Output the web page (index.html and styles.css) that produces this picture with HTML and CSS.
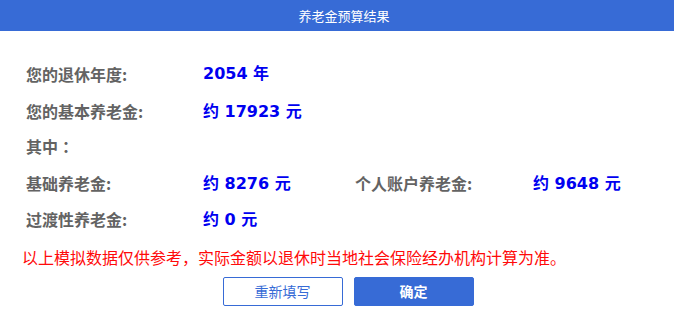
FILE: index.html
```html
<!DOCTYPE html>
<html lang="zh-CN">
<head>
<meta charset="utf-8">
<title>养老金预算结果</title>
<link rel="stylesheet" href="styles.css">
</head>
<body>
<div class="dialog">
  <div class="header">养老金预算结果</div>
  <div class="content">
    <div class="row">
      <span class="label">您的退休年度:</span>
      <span class="value">2054 年</span>
    </div>
    <div class="row">
      <span class="label">您的基本养老金:</span>
      <span class="value"><span class="cjk">约</span> 17923 <span class="cjk">元</span></span>
    </div>
    <div class="row">
      <span class="label">其中<span class="punct" lang="zh-TW">：</span></span>
    </div>
    <div class="row">
      <span class="label">基础养老金:</span>
      <span class="value"><span class="cjk">约</span> 8276 <span class="cjk">元</span></span>
      <span class="label">个人账户养老金:</span>
      <span class="value"><span class="cjk">约</span> 9648 <span class="cjk">元</span></span>
    </div>
    <div class="row">
      <span class="label">过渡性养老金:</span>
      <span class="value"><span class="cjk">约</span> 0 <span class="cjk">元</span></span>
    </div>
    <p class="notice">以上模拟数据仅供参考<span class="punct-kr" lang="ko">，</span>实际金额以退休时当地社会保险经办机构计算为准<span class="punct-kr" lang="ko">。</span></p>
    <div class="actions">
      <button class="btn btn-outline" type="button">重新填写</button>
      <button class="btn btn-primary" type="button">确定</button>
    </div>
  </div>
</div>
</body>
</html>
```
FILE: styles.css
```css
* { box-sizing: border-box; }
html, body {
  margin: 0;
  padding: 0;
  background: #ffffff;
}
body {
  font-family: "Noto Sans CJK SC", "Noto Sans", sans-serif;
}
.dialog {
  width: 674px;
}
.header {
  height: 31px;
  line-height: 31px;
  background: #376bd6;
  color: #ffffff;
  font-size: 13px;
  text-align: center;
  padding-left: 14px;
}
.content {
  padding: 25px 0 0 26px;
}
.row {
  display: grid;
  grid-template-columns: 177px 152px 178px auto;
  height: 36px;
  align-items: center;
}
.label {
  font-size: 16px;
  font-weight: bold;
  color: #636363;
  line-height: 36px;
  white-space: nowrap;
}
.punct {
  font-family: "Noto Sans CJK TC", "Noto Sans CJK SC", sans-serif;
}
.punct-kr {
  font-family: "Noto Sans CJK KR", "Noto Sans CJK SC", sans-serif;
}
.value {
  font-family: "DejaVu Sans", "Noto Sans CJK SC", sans-serif;
  font-size: 16px;
  font-weight: bold;
  color: #0000f0;
  line-height: 36px;
  white-space: nowrap;
}
.value .cjk {
  font-family: "Noto Sans CJK SC", sans-serif;
}
.notice {
  margin: 10px 0 0 -4px;
  font-size: 16px;
  line-height: 22px;
  color: #ff0a0a;
  white-space: nowrap;
}
.actions {
  display: flex;
  justify-content: center;
  gap: 11px;
  margin-top: 9px;
  padding-right: 4px;
}
.btn {
  width: 120px;
  height: 29px;
  border-radius: 2px;
  font-family: "Noto Sans CJK SC", sans-serif;
  font-size: 14px;
  line-height: 27px;
  padding: 0;
  cursor: pointer;
}
.btn-outline {
  background: #ffffff;
  color: #376bd6;
  border: 1px solid #376bd6;
}
.btn-primary {
  background: #376bd6;
  color: #ffffff;
  border: 1px solid #376bd6;
  font-weight: bold;
}
```
